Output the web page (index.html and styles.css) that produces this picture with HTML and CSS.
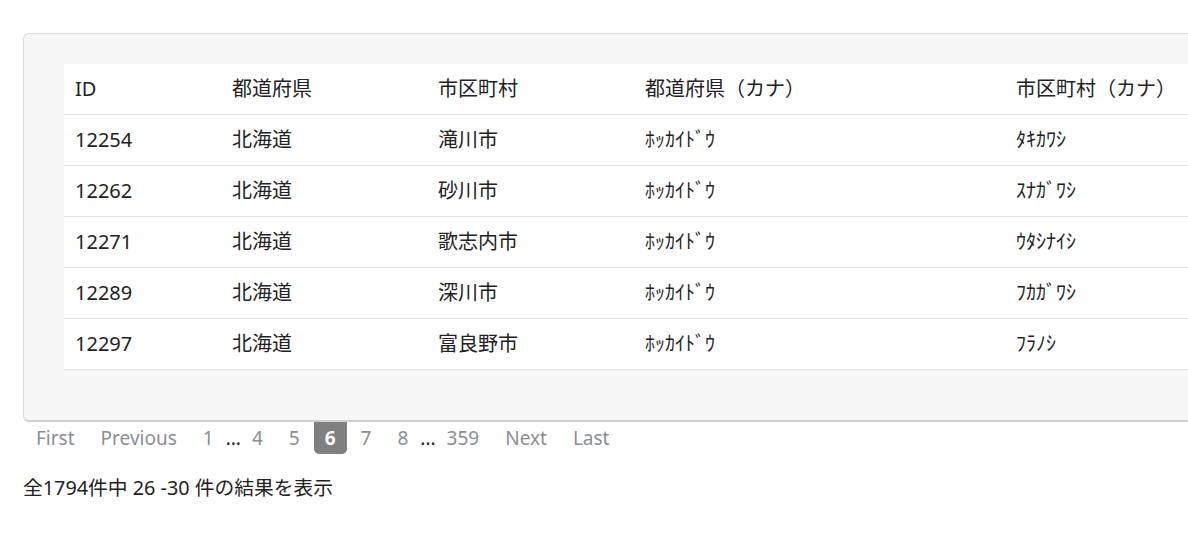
FILE: index.html
```html
<!DOCTYPE html>
<html lang="ja">
<head>
<meta charset="utf-8">
<link rel="stylesheet" href="styles.css">
</head>
<body>
<div class="page">
  <div class="card">
    <table class="grid">
      <thead>
        <tr><th class="c1">ID</th><th class="c2">都道府県</th><th class="c3">市区町村</th><th class="c4">都道府県（カナ）</th><th class="c5">市区町村（カナ）</th></tr>
      </thead>
      <tbody>
        <tr><td>12254</td><td>北海道</td><td>滝川市</td><td>ﾎｯｶｲﾄﾞｳ</td><td>ﾀｷｶﾜｼ</td></tr>
        <tr><td>12262</td><td>北海道</td><td>砂川市</td><td>ﾎｯｶｲﾄﾞｳ</td><td>ｽﾅｶﾞﾜｼ</td></tr>
        <tr><td>12271</td><td>北海道</td><td>歌志内市</td><td>ﾎｯｶｲﾄﾞｳ</td><td>ｳﾀｼﾅｲｼ</td></tr>
        <tr><td>12289</td><td>北海道</td><td>深川市</td><td>ﾎｯｶｲﾄﾞｳ</td><td>ﾌｶｶﾞﾜｼ</td></tr>
        <tr><td>12297</td><td>北海道</td><td>富良野市</td><td>ﾎｯｶｲﾄﾞｳ</td><td>ﾌﾗﾉｼ</td></tr>
      </tbody>
    </table>
  </div>
  <nav class="pager">
    <a class="pg">First</a>
    <a class="pg">Previous</a>
    <a class="pg">1</a>
    <span class="gap">...</span>
    <a class="pg">4</a>
    <a class="pg">5</a>
    <a class="pg active">6</a>
    <a class="pg">7</a>
    <a class="pg">8</a>
    <span class="gap">...</span>
    <a class="pg">359</a>
    <a class="pg">Next</a>
    <a class="pg">Last</a>
  </nav>
  <p class="summary">全1794件中 26 -30 件の結果を表示</p>
</div>
</body>
</html>
```

FILE: styles.css
```css
html, body {
  margin: 0;
  padding: 0;
  overflow: hidden;
  background: #fff;
}
body {
  font-family: "Noto Sans", "Noto Sans CJK JP", sans-serif;
  font-size: 20px;
  color: #222;
}
.page {
  padding: 33px 0 0 23px;
  width: 1400px;
}
.card {
  width: 1300px;
  background: #f7f7f7;
  border: 1px solid #dcdcdc;
  border-bottom: 2px solid #d0d0d0;
  border-radius: 6px;
  padding: 30px 40px 50px 40px;
}
.grid {
  border-collapse: collapse;
  background: #fff;
  width: 1220px;
  table-layout: fixed;
}
.grid th, .grid td {
  text-align: left;
  font-weight: 400;
  padding: 0 11px;
  height: 50px;
  border-bottom: 1px solid #dee2e6;
  white-space: nowrap;
  line-height: 24px;
}
.c1 { width: 135px; }
.c2 { width: 184px; }
.c3 { width: 185px; }
.c4 { width: 349px; }
.c5 { width: auto; }
.pager {
  display: flex;
  align-items: center;
  gap: 2px;
  height: 32px;
  margin-left: 1px;
  font-size: 19px;
}
.pg {
  display: block;
  padding: 0 12px;
  height: 32px;
  line-height: 32px;
  color: #8a8e93;
  cursor: pointer;
}
.pg.active {
  background: #808080;
  color: #fff;
  font-weight: 700;
  border-radius: 0 0 5px 5px;
  padding: 0 11px;
}
.gap {
  color: #222;
  margin: 0 -3px 0 -2px;
  line-height: 32px;
}
.summary {
  margin: 20px 0 0 0;
  line-height: 28px;
  color: #222;
  font-size: 19.8px;
}
```
